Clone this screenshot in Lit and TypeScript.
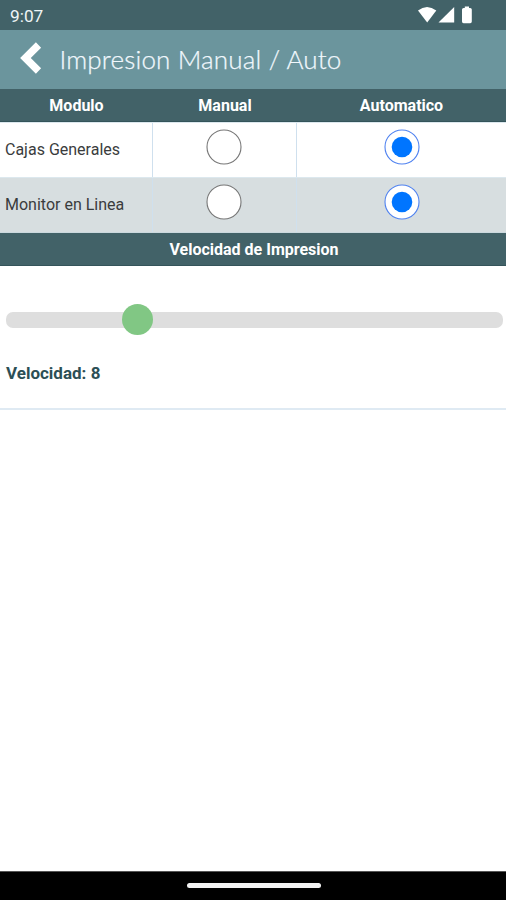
import { LitElement, html, css } from "lit";
import { customElement, property, state } from "lit/decorators.js";

@customElement("radio-dot")
class RadioDot extends LitElement {
  @property({ type: Boolean }) checked = false;
  static styles = css`
    :host { display: block; height: 36px; }
    svg { display: block; }
    .ring { fill: #fff; stroke: #777; stroke-width: 1.1; }
    .on { stroke: #4f82f0; }
    .dot { fill: #0075ff; }
  `;
  render() {
    return html`<svg width="36" height="36" viewBox="0 0 36 36">
      <circle class="ring ${this.checked ? "on" : ""}" cx="18" cy="18" r="17"></circle>
      ${this.checked
        ? html`<svg width="36" height="36"><circle class="dot" cx="18" cy="18" r="10.3"></circle></svg>`
        : ""}
    </svg>`;
  }
}

@customElement("app-root")
class AppRoot extends LitElement {
  @state() private speed = 8;
  @state() private modules = [
    { name: "Cajas Generales", auto: true },
    { name: "Monitor en Linea", auto: true },
  ];

  static styles = css`
    :host {
      display: flex;
      flex-direction: column;
      height: 900px;
      background: #fff;
      font-family: Roboto, sans-serif;
      overflow: hidden;
    }
    .status {
      display: flex;
      justify-content: space-between;
      height: 30px;
      box-sizing: border-box;
      padding: 0 32px 0 10px;
      background: #426268;
      color: #eef5f6;
      font-size: 17.3px;
      line-height: 32px;
    }
    .icons { display: block; margin-top: 5px; fill: #fff; }
    .bar {
      display: flex;
      align-items: center;
      height: 59px;
      background: #6b959d;
      color: #f1f8fd;
    }
    .back { margin: 0 0 3px 20px; flex: none; }
    .title {
      margin: 0 0 2px 17.5px;
      font-family: Lato, sans-serif;
      font-weight: 300;
      font-size: 26px;
      letter-spacing: 0.17px;
      white-space: nowrap;
      -webkit-text-stroke: 0.25px #f1f8fd;
    }
    .row { display: grid; grid-template-columns: 153px 144px 209px; }
    .head {
      height: 33px;
      background: #426268;
      color: #fff;
      font-weight: 700;
      font-size: 16px;
      line-height: 33px;
      text-align: center;
      box-sizing: border-box;
      border-bottom: 1px solid #34545a;
    }
    .wide { padding-left: 2px; }
    .item { height: 55px; color: #3a3c3d; font-size: 16px; border-top: 1px solid #dce8ee; box-sizing: border-box; }
    .item.alt { background: #d7dee0; border-bottom: 1px solid #cbd9de; height: 56px; }
    .cell { display: flex; justify-content: center; padding-top: 6px; box-sizing: border-box; }
    .lined { border-right: 1px solid #cfe0ee; }
    .manual { padding-right: 1px; }
    .name { justify-content: flex-start; padding: 0 0 2px 5px; align-items: center; }
    .speed { height: 144px; box-sizing: border-box; border-bottom: 2px solid #dfeaf3; padding: 38px 3px 0 6px; }
    .track {
      display: flex;
      align-items: center;
      height: 31px;
    }
    .rail { position: relative; width: 100%; height: 16px; border-radius: 7px; background: #dedede; }
    .thumb {
      position: absolute;
      top: -7.5px;
      width: 31px;
      height: 31px;
      border-radius: 50%;
      background: #81c784;
    }
    .value { margin-top: 27px; color: #2c4f55; font-weight: 700; font-size: 17px; line-height: 22px; }
    .nav {
      display: flex;
      justify-content: center;
      margin-top: auto;
      height: 29px;
      box-sizing: border-box;
      border-top: 1px solid #555;
      padding: 11px 0 0 1px;
      background: #000;
    }
    .pill { width: 134px; height: 5px; border-radius: 2.5px; background: #f2f2f2; }
  `;

  render() {
    return html`
      <div class="status">
        <span class="clock">9:07</span>
        <svg class="icons" width="56" height="20" viewBox="0 0 56 20">
          <path d="M0 5.6Q9-1.6 18.3 5.6L9.2 17.6Z"></path>
          <path d="M20.5 17.6L36.2 2V17.6Z"></path>
          <path d="M46.8 1.4h4.2v1.6h1.2q1.6 0 1.6 1.6v12q0 1.6-1.6 1.6h-6.6q-1.6 0-1.6-1.6v-12q0-1.6 1.6-1.6h1.2Z"></path>
        </svg>
      </div>
      <div class="bar">
        <svg class="back" width="22" height="34" viewBox="0 0 22 34">
          <path d="M18.5 4L5.4 17L18.5 30" fill="none" stroke="#fff" stroke-width="7.4"></path>
        </svg>
        <span class="title">Impresion Manual / Auto</span>
      </div>
      <div class="row head"><span>Modulo</span><span>Manual</span><span>Automatico</span></div>
      ${this.modules.map(
        (m, i) => html`<div class="row item ${i % 2 ? "alt" : ""}">
          <div class="cell name lined">${m.name}</div>
          <div class="cell manual lined"><radio-dot ?checked=${!m.auto}></radio-dot></div>
          <div class="cell"><radio-dot ?checked=${m.auto}></radio-dot></div>
        </div>`
      )}
      <div class="head wide">Velocidad de Impresion</div>
      <div class="speed">
        <div class="track"><div class="rail"><div class="thumb" style="left:${this.speed * 14.5}px"></div></div></div>
        <div class="value">Velocidad: ${this.speed}</div>
      </div>
      <div class="nav"><div class="pill"></div></div>
    `;
  }
}
